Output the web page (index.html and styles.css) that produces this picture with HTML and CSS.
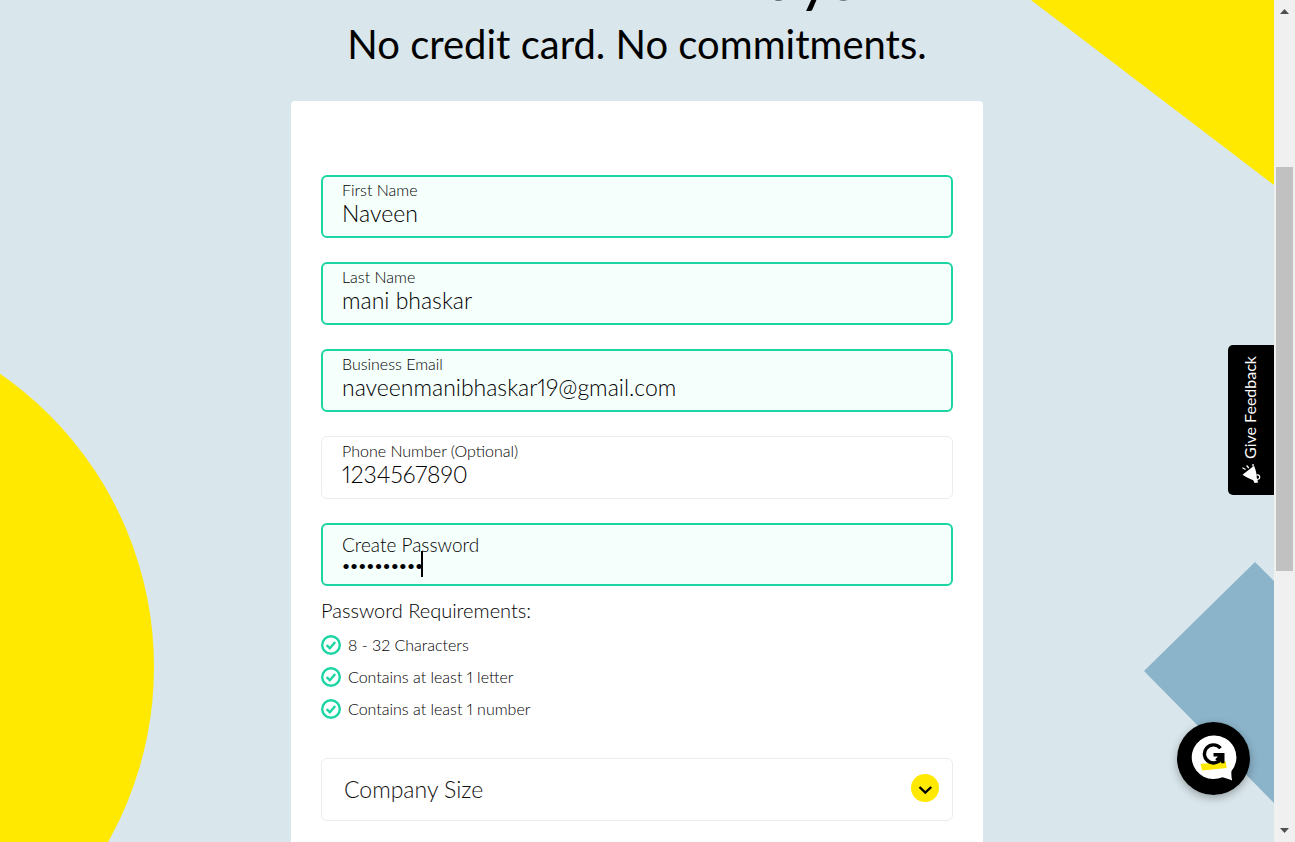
FILE: index.html
```html
<!DOCTYPE html>
<html lang="en">
<head>
<meta charset="utf-8">
<title>Start your free trial</title>
<link rel="stylesheet" href="styles.css">
</head>
<body>
<div class="viewport">
  <main class="page">
    <div class="shape shape-triangle"></div>
    <div class="shape shape-circle"></div>
    <div class="shape shape-diamond"></div>

    <header class="intro">
      <h1 class="intro-title">Free for 14 days</h1>
      <p class="intro-subtitle">No credit card. No commitments.</p>
    </header>

    <form class="card">
      <div class="field field-valid">
        <label for="first">First Name</label>
        <input id="first" type="text" value="Naveen">
      </div>
      <div class="field field-valid">
        <label for="last">Last Name</label>
        <input id="last" type="text" value="mani bhaskar">
      </div>
      <div class="field field-valid">
        <label for="email">Business Email</label>
        <input id="email" type="email" value="naveenmanibhaskar19@gmail.com">
      </div>
      <div class="field">
        <label for="phone">Phone Number (Optional)</label>
        <input id="phone" type="tel" value="1234567890">
      </div>
      <div class="field field-valid field-password">
        <label for="password">Create Password</label>
        <input id="password" type="password" value="abcdefgh12">
        <span class="caret"></span>
      </div>

      <section class="rules">
        <h2 class="rules-title">Password Requirements:</h2>
        <ul class="rules-list">
          <li><svg class="tick" viewBox="0 0 20 20"><circle cx="10" cy="10" r="8.8"/><path d="M5.6 10.2 8.8 13.2 14.2 7"/></svg>8 - 32 Characters</li>
          <li><svg class="tick" viewBox="0 0 20 20"><circle cx="10" cy="10" r="8.8"/><path d="M5.6 10.2 8.8 13.2 14.2 7"/></svg>Contains at least 1 letter</li>
          <li><svg class="tick" viewBox="0 0 20 20"><circle cx="10" cy="10" r="8.8"/><path d="M5.6 10.2 8.8 13.2 14.2 7"/></svg>Contains at least 1 number</li>
        </ul>
      </section>

      <div class="select">
        <select aria-label="Company Size">
          <option>Company Size</option>
        </select>
        <svg class="select-arrow" viewBox="0 0 28 28"><circle cx="14" cy="14" r="14"/><path d="M8.500 13 14.300 18.600 20.200 13"/></svg>
      </div>
    </form>

    <button class="feedback" type="button">
      <svg class="feedback-icon" viewBox="0 0 20 20"><path class="horn" d="M1.500 10.800 13 1.800C14.500 5 15.800 10 15.800 14L17.200 18.500 13.600 19 12.200 16.200C8.500 14.500 4.500 13 1.500 10.800Z"/><path class="lines" d="M1.500 3.800 4.500 5.500M5.600 1.500 7.800 4M12 0V2.600M15.500 11.200C18 10 19.500 12.500 18.200 14.800L16 15.500"/></svg>
      <span class="feedback-text">Give Feedback</span>
    </button>

    <button class="chat" type="button" aria-label="Open chat">
      <svg viewBox="0 0 73 73">
        <circle cx="36.500" cy="36.500" r="36.500"/>
        <path fill="#fff" d="M36.500 13.500a22 21.800 0 1 0 9 41.800c3.500.8 6.500 1.800 9.600 3.200-.7-3.200-1-6.500-.6-9.500A22 21.800 0 0 0 36.500 13.500Z"/>
        <path fill="#ffe900" d="M23.600 42 48.800 39.500 49.600 46 25 48.600Z"/>
        <path fill="none" stroke="#000" stroke-width="3.400" d="M43.500 26.300A9 9 0 1 0 45.200 34M36.500 32.800H45.800V41.200M45 32.800 39.500 38.500"/>
      </svg>
    </button>
  </main>

  <div class="scrollbar">
    <svg class="scroll-arrow" viewBox="0 0 9 5"><path d="M0 5 4.500 0 9 5Z"/></svg>
    <div class="scroll-track"><div class="scroll-thumb"></div></div>
    <svg class="scroll-arrow" viewBox="0 0 9 5"><path d="M0 0 4.500 5 9 0Z"/></svg>
  </div>
</div>
</body>
</html>
```
FILE: styles.css
```css
* {
  box-sizing: border-box;
}

body {
  margin: 0;
  font-family: Lato, "Open Sans", sans-serif;
  font-weight: 400;
  font-variant-numeric: proportional-nums;
  color: #000;
}

input,
select,
button {
  margin: 0;
  padding: 0;
  border: 0;
  background: none;
  font: inherit;
  font-variant-numeric: inherit;
  color: inherit;
}

.viewport {
  display: flex;
  height: 100vh;
  overflow: hidden;
}

.page {
  position: relative;
  flex: 1;
  overflow: hidden;
  background: #d9e6eb;
}

/* Background shapes */
.shape {
  position: absolute;
}

.shape-triangle {
  top: 0;
  right: 0;
  width: 243px;
  height: 185px;
  background: #ffe900;
  clip-path: polygon(0 0, 100% 0, 100% 100%);
}

.shape-circle {
  top: 311px;
  left: -558px;
  width: 712px;
  height: 712px;
  border-radius: 50%;
  background: #ffe900;
}

.shape-diamond {
  top: 562px;
  right: 0;
  width: 130px;
  height: 241px;
  background: #8bb3c9;
  clip-path: polygon(0 109px, 111px 0, 130px 19px, 130px 241px);
}

/* Heading */
.intro {
  position: relative;
  margin-top: -56px;
  text-align: center;
}

.intro-title {
  margin: 0;
  font-size: 64px;
  line-height: 64px;
  font-weight: 400;
}

.intro-subtitle {
  margin: 12px 0 0;
  font-size: 40px;
  line-height: 48px;
}

/* Form card */
.card {
  position: relative;
  display: flex;
  flex-direction: column;
  gap: 24px;
  max-width: 692px;
  margin: 33px auto 0;
  padding: 74px 30px 60px;
  border-radius: 4px;
  background: #fff;
  font-weight: 300;
}

.field {
  position: relative;
  display: flex;
  flex-direction: column;
  height: 63px;
  padding: 5px 20px;
  border: 1px solid #ececee;
  border-radius: 6px;
}

.field-valid {
  padding: 4px 19px;
  border: 2px solid #1bd6a2;
  background: #f5fffc;
}

.field label {
  font-size: 16px;
  line-height: 18px;
  color: #000;
}

.field input {
  width: 100%;
  height: 28px;
  font-size: 23px;
  outline: none;
}

.field-password label {
  padding-top: 6px;
  font-size: 19px;
  line-height: 20px;
}

.field-password input {
  height: 20px;
  font-size: 14px;
  font-weight: 400;
}

.caret {
  position: absolute;
  top: 26px;
  left: 98px;
  width: 2px;
  height: 26px;
  background: #000;
}

/* Password rules */
.rules {
  margin-top: -12px;
}

.rules-title {
  margin: 0;
  font-size: 20px;
  line-height: 24px;
  font-weight: 300;
}

.rules-list {
  display: flex;
  flex-direction: column;
  gap: 12px;
  margin: 13px 0 15px;
  padding: 0;
  list-style: none;
  font-size: 16px;
  line-height: 20px;
}

.rules-list li {
  display: flex;
  align-items: center;
  gap: 7px;
}

.tick {
  width: 20px;
  height: 20px;
  fill: none;
  stroke: #1bd6a2;
  stroke-width: 2.4;
}

.select {
  position: relative;
}

.select select {
  display: block;
  width: 100%;
  height: 63px;
  padding: 0 60px 2px 22px;
  border: 1px solid #ececee;
  border-radius: 6px;
  font-size: 23px;
  color: #111;
  appearance: none;
}

.select-arrow {
  position: absolute;
  top: 16px;
  right: 14px;
  width: 28px;
  height: 28px;
  fill: #ffe900;
  pointer-events: none;
}

.select-arrow path {
  fill: none;
  stroke: #000;
  stroke-width: 2.4;
}

/* Floating buttons */
.feedback {
  position: absolute;
  top: 345px;
  right: 0;
  display: flex;
  flex-direction: column-reverse;
  align-items: center;
  justify-content: space-between;
  width: 46px;
  height: 150px;
  padding: 11px 0;
  border-radius: 5px 0 0 5px;
  background: #000;
  color: #fff;
}

.feedback-text {
  margin-right: 2px;
  font-size: 16px;
  line-height: 20px;
  writing-mode: vertical-rl;
  transform: rotate(180deg);
}

.feedback-icon {
  width: 20px;
  height: 20px;
}

.horn {
  fill: #fff;
}

.lines {
  fill: none;
  stroke: #fff;
  stroke-width: 1.3;
}

.chat {
  position: absolute;
  right: 24px;
  bottom: 47px;
  width: 73px;
  height: 73px;
  border-radius: 50%;
  box-shadow: 0 3px 8px rgba(0, 0, 0, 0.3);
}

.chat svg {
  display: block;
}

/* Scrollbar */
.scrollbar {
  display: flex;
  flex-direction: column;
  align-items: center;
  gap: 7px;
  width: 21px;
  padding: 9px 2px;
  background: #f0f0f0;
}

.scroll-arrow {
  width: 9px;
  height: 5px;
  fill: #505050;
}

.scroll-track {
  flex: 1;
  width: 100%;
  padding-top: 146px;
}

.scroll-thumb {
  height: 404px;
  background: #c1c1c1;
}
```
